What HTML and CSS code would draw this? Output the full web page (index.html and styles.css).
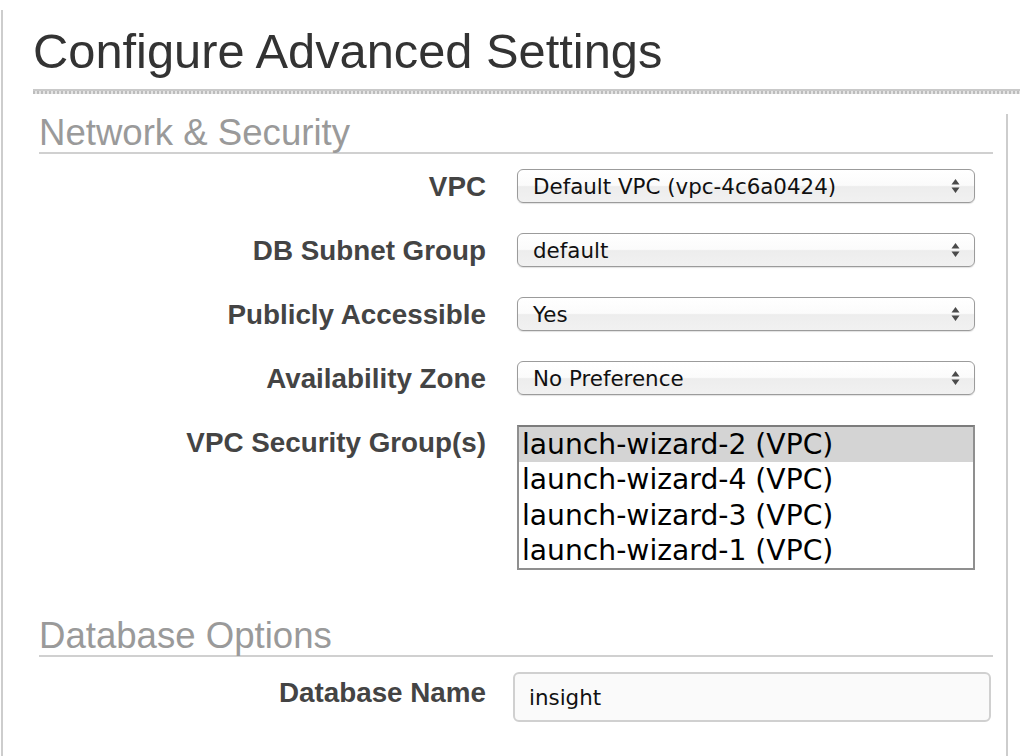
FILE: index.html
```html
<!DOCTYPE html>
<html lang="en">
<head>
<meta charset="utf-8">
<title>Configure Advanced Settings</title>
<link rel="stylesheet" href="styles.css">
</head>
<body>
<div class="page">
  <h1 class="title">Configure Advanced Settings</h1>
  <div class="rule"></div>
  <div class="panel">
    <h2 class="section-title">Network &amp; Security</h2>
    <div class="form">
      <div class="label">VPC</div>
      <div class="select"><span class="select-text">Default VPC (vpc-4c6a0424)</span><svg class="arrows" width="9" height="16" viewBox="0 0 9 16"><path d="M4.5 1 L8.5 6.5 L0.5 6.5 Z M4.5 15 L8.5 9.5 L0.5 9.5 Z" fill="#4a4a4a"/></svg></div>

      <div class="label">DB Subnet Group</div>
      <div class="select"><span class="select-text">default</span><svg class="arrows" width="9" height="16" viewBox="0 0 9 16"><path d="M4.5 1 L8.5 6.5 L0.5 6.5 Z M4.5 15 L8.5 9.5 L0.5 9.5 Z" fill="#4a4a4a"/></svg></div>

      <div class="label">Publicly Accessible</div>
      <div class="select"><span class="select-text">Yes</span><svg class="arrows" width="9" height="16" viewBox="0 0 9 16"><path d="M4.5 1 L8.5 6.5 L0.5 6.5 Z M4.5 15 L8.5 9.5 L0.5 9.5 Z" fill="#4a4a4a"/></svg></div>

      <div class="label">Availability Zone</div>
      <div class="select"><span class="select-text">No Preference</span><svg class="arrows" width="9" height="16" viewBox="0 0 9 16"><path d="M4.5 1 L8.5 6.5 L0.5 6.5 Z M4.5 15 L8.5 9.5 L0.5 9.5 Z" fill="#4a4a4a"/></svg></div>

      <div class="label">VPC Security Group(s)</div>
      <div class="listbox">
        <div class="option option--selected">launch-wizard-2 (VPC)</div>
        <div class="option">launch-wizard-4 (VPC)</div>
        <div class="option">launch-wizard-3 (VPC)</div>
        <div class="option">launch-wizard-1 (VPC)</div>
      </div>
    </div>

    <h2 class="section-title section-title--spaced">Database Options</h2>
    <div class="form">
      <div class="label label--input">Database Name</div>
      <div class="input">insight</div>
    </div>
  </div>
</div>
</body>
</html>
```

FILE: styles.css
```css
html, body {
  margin: 0;
  padding: 0;
  background: #ffffff;
}

body {
  font-family: "Liberation Sans", Arial, Helvetica, sans-serif;
  overflow: hidden;
}

.page {
  margin: 10px 0 0 1px;
  padding: 13px 0 0 30px;
  border-left: 2px solid #cdcdcd;
  min-height: 746px;
  box-sizing: border-box;
}

.title {
  margin: 0;
  font-size: 48.8px;
  line-height: 56px;
  font-weight: normal;
  color: #333333;
}

.rule {
  margin-top: 10px;
  height: 5px;
  background:
    linear-gradient(#c9c9c9, #c9c9c9) top left / 100% 2px no-repeat,
    repeating-linear-gradient(90deg, #bdbdbd 0 2px, #e4e4e4 2px 4px) bottom left / 100% 3px no-repeat;
}

.panel {
  margin-top: 20px;
  margin-right: 12px;
  border-right: 2px solid #cdcdcd;
  padding-bottom: 40px;
}

.section-title {
  margin: 0 13px 0 6px;
  font-size: 36.6px;
  line-height: 38px;
  font-weight: normal;
  color: #9a9a9a;
  border-bottom: 2px solid #d0d0d0;
}

.section-title--spaced {
  margin-top: 47px;
}

.form {
  display: grid;
  grid-template-columns: 453px 458px;
  column-gap: 31px;
  row-gap: 30px;
  margin-top: 15px;
}

.label {
  font-weight: bold;
  font-size: 27.8px;
  line-height: 33px;
  color: #444444;
  text-align: right;
  padding-top: 1px;
}

.label--input {
  padding-top: 4px;
}

.select {
  height: 34px;
  box-sizing: border-box;
  border: 1px solid #9b9b9b;
  border-radius: 6px;
  background: linear-gradient(#ffffff 0%, #fbfbfb 48%, #ededed 52%, #f1f1f1 100%);
  box-shadow: 0 1px 1px rgba(0, 0, 0, 0.12);
  display: flex;
  align-items: center;
  padding: 0 14px 0 15px;
  font-family: "DejaVu Sans", "Liberation Sans", sans-serif;
  font-size: 21.4px;
  color: #111111;
}

.select-text {
  flex: 1;
  white-space: nowrap;
  padding-top: 1px;
}

.arrows {
  flex: none;
  display: block;
}

.listbox {
  height: 145px;
  box-sizing: border-box;
  border: 2px solid #8f8f8f;
  border-top-color: #7c7c7c;
  background: #ffffff;
  font-family: "DejaVu Sans", "Liberation Sans", sans-serif;
  font-size: 28.2px;
  color: #000000;
}

.option {
  line-height: 35.25px;
  padding-left: 3px;
  white-space: nowrap;
}

.option--selected {
  background: #d4d4d4;
}

.input {
  justify-self: start;
  margin-left: -4px;
  width: 478px;
  height: 50px;
  box-sizing: border-box;
  border: 2px solid #d0d0d0;
  border-radius: 6px;
  background: #fafafa;
  display: flex;
  align-items: center;
  padding-left: 14px;
  font-family: "DejaVu Sans", "Liberation Sans", sans-serif;
  font-size: 21.4px;
  color: #111111;
}
```
